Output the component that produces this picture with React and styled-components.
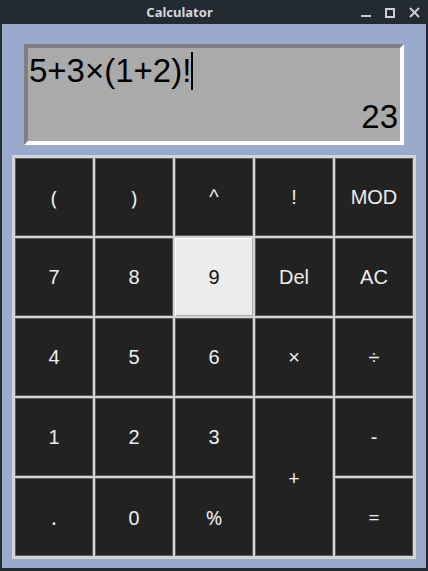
import { createGlobalStyle, styled } from "styled-components"

const keys = [
  { label: '(', alt: true },
  { label: ')', alt: true },
  { label: '^' },
  { label: '!' },
  { label: 'MOD' },
  { label: '7' },
  { label: '8' },
  { label: '9', active: true },
  { label: 'Del' },
  { label: 'AC' },
  { label: '4' },
  { label: '5' },
  { label: '6' },
  { label: '×' },
  { label: '÷' },
  { label: '1' },
  { label: '2' },
  { label: '3' },
  { label: '+', alt: true, tall: true },
  { label: '-' },
  { label: '.', alt: true },
  { label: '0', alt: true },
  { label: '%', alt: true },
  { label: '=', alt: true },
]

const App = () => {
  return (
    <>
      <GlobalStyle />
      <Window>
        <TitleBar>
          <Title>Calculator</Title>
          <Controls>
            <svg width="10" height="10" viewBox="0 0 10 10">
              <rect x="0" y="7" width="10" height="2" fill="#c9ced3" />
            </svg>
            <svg width="10" height="10" viewBox="0 0 10 10">
              <rect x="1" y="1" width="8" height="8" fill="none" stroke="#c9ced3" strokeWidth="2" />
            </svg>
            <svg width="11" height="11" viewBox="0 0 11 11">
              <path d="M1 1 L10 10 M10 1 L1 10" stroke="#c9ced3" strokeWidth="2" />
            </svg>
          </Controls>
        </TitleBar>
        <Body>
          <Display>
            <Expression>
              5+3×(1+2)!<Caret />
            </Expression>
            <Result>23</Result>
          </Display>
          <Keypad>
            {keys.map((k) => (
              <Key key={k.label} $alt={k.alt} $active={k.active} $tall={k.tall}>
                {k.label}
              </Key>
            ))}
          </Keypad>
        </Body>
      </Window>
    </>
  )
}

const GlobalStyle = createGlobalStyle`
  html, body {
    margin: 0;
    padding: 0;
    background: #232a31;
  }
`

const Window = styled.div`
  width: 428px;
  height: 571px;
  display: flex;
  flex-direction: column;
  background: #232a31;
  box-sizing: border-box;
  padding: 0 2px 3px 2px;
`

const TitleBar = styled.div`
  height: 24px;
  display: flex;
  align-items: center;
  margin: 0 -2px;
`

const Title = styled.div`
  flex: 1;
  text-align: center;
  font-family: "Noto Sans", sans-serif;
  font-weight: 700;
  font-size: 13px;
  color: #d3d8dd;
  padding-left: 1px;
`

const Controls = styled.div`
  width: 70px;
  display: flex;
  align-items: center;
  gap: 14px;
  padding: 0 0 0 3px;
  box-sizing: border-box;
  margin-top: 1px;
`

const Body = styled.div`
  flex: 1;
  background: #99aacc;
  display: flex;
  flex-direction: column;
  gap: 10px;
  padding: 20px 10px 9px 10px;
`

const Display = styled.div`
  margin: 0 12px;
  height: 101px;
  box-sizing: border-box;
  background: #aaaaaa;
  border: 4px solid;
  border-color: #808080 #ffffff #ffffff #808080;
  display: flex;
  flex-direction: column;
  justify-content: space-between;
  padding: 4px 2px 5px 1px;
  font-family: "Liberation Sans", Arial, sans-serif;
  font-size: 33px;
  line-height: 38px;
  color: #000;
`

const Expression = styled.div`
  display: flex;
  align-items: stretch;
`

const Caret = styled.span`
  width: 2px;
  background: #000;
`

const Result = styled.div`
  text-align: right;
`

const Keypad = styled.div`
  display: grid;
  grid-template-columns: repeat(5, 78px);
  grid-auto-rows: 78px;
  gap: 2px;
  padding: 3px;
  background: #d4d4d4;
`

const Key = styled.div`
  box-sizing: border-box;
  display: flex;
  align-items: center;
  justify-content: center;
  grid-row: ${({ $tall }) => ($tall ? 'span 2' : 'auto')};
  background: ${({ $active }) => ($active ? '#ececec' : '#222222')};
  color: ${({ $active }) => ($active ? '#111' : '#eeeeee')};
  border: 1px solid;
  border-color: ${({ $active }) => ($active ? '#ffffff #a8a8a8 #a8a8a8 #ffffff' : '#5c5c5c')};
  font-family: ${({ $alt }) => ($alt ? '"Noto Sans", sans-serif' : '"Liberation Sans", Arial, sans-serif')};
  font-size: 20px;
`

export default App
